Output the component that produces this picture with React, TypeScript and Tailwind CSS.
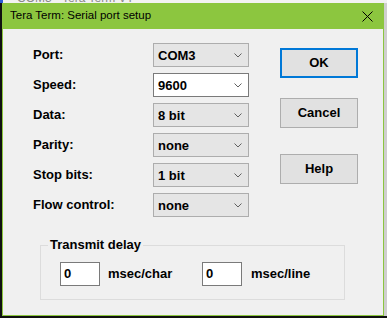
const FONT = "font-['Liberation_Sans',Arial,sans-serif]";

const ROWS = [
  { label: "Port:", value: "COM3" },
  { label: "Speed:", value: "9600", editable: true },
  { label: "Data:", value: "8 bit" },
  { label: "Parity:", value: "none" },
  { label: "Stop bits:", value: "1 bit" },
  { label: "Flow control:", value: "none" },
];

function Chevron() {
  return (
    <svg width="8" height="5" viewBox="0 0 8 5" className="shrink-0">
      <path d="M0.5 0.5 L4 4 L7.5 0.5" fill="none" stroke="#606060" strokeWidth="1" />
    </svg>
  );
}

function Combo({ value, editable = false }: { value: string; editable?: boolean }) {
  return (
    <div
      className={`flex h-[24px] w-[96px] items-center justify-between border pl-[4px] pr-[6px] ${
        editable ? "border-[#7a7a7a] bg-white" : "border-[#adadad] bg-[#e5e5e5]"
      }`}
    >
      <span className="leading-none">{value}</span>
      <Chevron />
    </div>
  );
}

function DialogButton({ label, focused = false, className = "" }: { label: string; focused?: boolean; className?: string }) {
  return (
    <div
      className={`flex h-[30px] w-[78px] items-center justify-center bg-[#e1e1e1] ${
        focused ? "border-2 border-[#0078d7]" : "border border-[#adadad]"
      } ${className}`}
    >
      {label}
    </div>
  );
}

function EditBox({ value }: { value: string }) {
  return (
    <div className="flex h-[24px] w-[40px] items-center border border-[#7a7a7a] bg-white pl-[3px]">
      {value}
    </div>
  );
}

export default function App() {
  return (
    <div className={`flex h-[318px] w-[387px] flex-col overflow-hidden bg-[#101010] ${FONT}`}>
      {/* window behind the dialog */}
      <div className="flex h-[3px] shrink-0 items-end overflow-hidden bg-[#f2f2f2]">
        <div className="h-[3px] w-[3px] bg-[#2a5bd7]" />
        <span className="-mb-[1px] ml-[14px] text-[12px] leading-none text-[#8a8a8a]">COM3 - Tera Term VT</span>
      </div>

      <div className="flex h-[313px] shrink-0">
        <div className="w-[2px] shrink-0 bg-[#101010]" />

        <div className="flex w-[382px] shrink-0 flex-col border border-t-0 border-[#8cc63f] bg-[#f0f0f0]">
          {/* title bar */}
          <div className="-mx-px flex h-[26px] shrink-0 items-center justify-between bg-[#8cc63f] pl-[8px] pr-[11px]">
            <span className="text-[11.5px] text-black">Tera Term: Serial port setup</span>
            <svg width="11" height="11" viewBox="0 0 11 11">
              <path d="M0.5 0.5 L10.5 10.5 M10.5 0.5 L0.5 10.5" stroke="#000" strokeWidth="1" />
            </svg>
          </div>

          {/* body */}
          <div className="flex flex-col pl-[30px] pt-[14px] text-[13px] font-bold text-black">
            <div className="flex">
              <div className="flex flex-col gap-[6px]">
                {ROWS.map((row) => (
                  <div key={row.label} className="flex h-[24px] items-center">
                    <span className="w-[120px]">{row.label}</span>
                    <Combo value={row.value} editable={row.editable} />
                  </div>
                ))}
              </div>

              <div className="ml-[31px] flex flex-col pt-[5px]">
                <DialogButton label="OK" focused />
                <DialogButton label="Cancel" className="mt-[20px]" />
                <DialogButton label="Help" className="mt-[26px]" />
              </div>
            </div>

            <fieldset className="ml-[7px] mt-[20px] h-[63px] w-[305px] border border-[#dcdcdc] px-[7px]">
              <legend className="px-[2px] leading-[16px]">Transmit delay</legend>
              <div className="ml-[12px] mt-[9px] flex items-center">
                <EditBox value="0" />
                <span className="ml-[8px] w-[94px]">msec/char</span>
                <EditBox value="0" />
                <span className="ml-[9px]">msec/line</span>
              </div>
            </fieldset>
          </div>
        </div>

        <div className="flex-1 bg-[#cfcfcf]" />
      </div>
    </div>
  );
}
